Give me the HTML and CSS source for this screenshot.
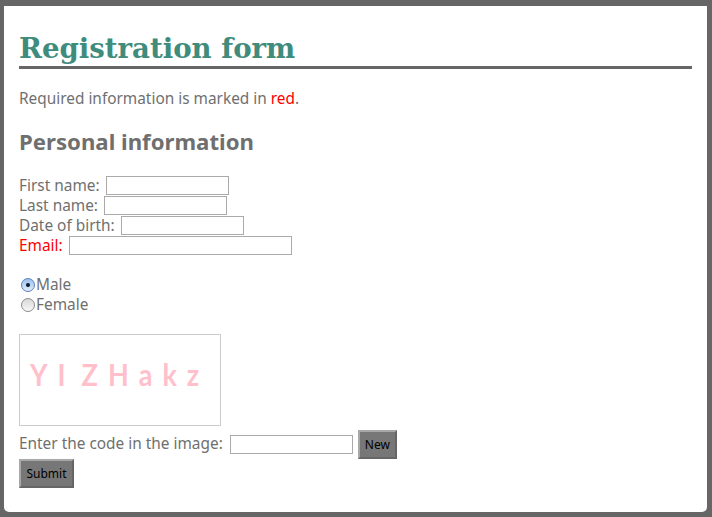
FILE: index.html
```html
<!DOCTYPE html>
<html lang="en">

<head>
    <meta charset="UTF-8">
    <title>Registration form</title>
    <link rel="stylesheet" href="styles.css">
</head>

<body>
    <div class="main-wrap">
        <h1 class="page-title">Registration form</h1>
        <p class="intro">Required information is marked in <span class="required">red</span>.</p>
        <h2 class="section-title">Personal information</h2>
        <form>
            <section class="fields">
                <div class="field-row"><label for="first">First name:</label> <input type="text" id="first" class="text-input"></div>
                <div class="field-row"><label for="last">Last name:</label> <input type="text" id="last" class="text-input"></div>
                <div class="field-row"><label for="dob">Date of birth:</label> <input type="text" id="dob" class="text-input"></div>
                <div class="field-row required"><label for="email">Email:</label> <input type="text" id="email" class="text-input email-input"></div>
            </section>
            <section class="gender">
                <div class="radio-row"><input type="radio" name="gender" id="male" class="radio" checked><label for="male">Male</label></div>
                <div class="radio-row"><input type="radio" name="gender" id="female" class="radio"><label for="female">Female</label></div>
            </section>
            <div class="captcha">
                <span>Y</span><span>I</span><span class="captcha-gap">Z</span><span>H</span><span>a</span><span>k</span><span>z</span>
            </div>
            <div class="code-row">
                <label for="code">Enter the code in the image:</label>
                <input type="text" id="code" class="text-input">
                <input type="button" value="New" class="btn">
            </div>
            <input type="submit" value="Submit" class="btn submit-btn">
        </form>
    </div>
</body>

</html>
```

FILE: styles.css
```css
html,
body {
    margin: 0;
    padding: 0;
    height: 100%;
    overflow: hidden;
}

body {
    background-color: #666666;
    padding: 6px 5px 5px 4px;
    box-sizing: border-box;
}

.main-wrap {
    height: 100%;
    box-sizing: border-box;
    background-color: #ffffff;
    border-radius: 0 0 5px 5px;
    padding: 25px 15px 0;

    color: #6f6f6f;
    font-family: "Noto Sans", "Open Sans", sans-serif;
    font-size: 15.4px;
    line-height: 20px;
}

.page-title {
    margin: 0;
    height: 35px;
    border-bottom: 3px solid #666666;

    color: #408c7c;
    font-family: "DejaVu Serif", Georgia, serif;
    font-size: 27.6px;
    line-height: 35px;
}

.intro {
    margin: 20px 0 0;
}

.required {
    color: #ff0000;
}

.section-title {
    margin: 18px 0 0;
    font-size: 22.2px;
    line-height: 30px;
}

.fields {
    margin-top: 17px;
}

.field-row {
    height: 20px;
    display: flex;
    align-items: flex-start;
    gap: 6px;
}

.field-row label,
.radio-row label {
    padding-top: 2px;
}

.text-input {
    width: 123px;
    height: 19px;
    box-sizing: border-box;
    margin: 2px 0 0;
    padding: 0 2px;
    border: 1px solid #aaaaaa;
    background-color: #ffffff;
}

.email-input {
    width: 223px;
}

.gender {
    margin-top: 19px;
}

.radio-row {
    height: 20px;
    display: flex;
    align-items: flex-start;
}

.radio {
    appearance: none;
    width: 14px;
    height: 14px;
    margin: 5px 1px 0 2px;
    box-sizing: border-box;
    border: 1px solid #8c8c8c;
    border-radius: 50%;
    background: linear-gradient(#d8d8d8, #f8f8f8);
}

.radio:checked {
    border-color: #5b82b8;
    background: radial-gradient(circle, #10203a 0, #10203a 1.5px, transparent 2.5px), linear-gradient(#9cc0ee, #e0edfb);
}

.captcha {
    width: 202px;
    height: 92px;
    box-sizing: border-box;
    margin-top: 21px;
    padding: 0 0 13px 10px;
    border: 1px solid #cccccc;

    display: flex;
    align-items: center;
    gap: 10px;

    color: #ffc0cb;
    font-family: "Lato", sans-serif;
    font-size: 27px;
    font-weight: 700;
}

.captcha span {
    transform: scaleY(1.15);
}

.captcha-gap {
    margin-left: 6px;
}

.code-row {
    height: 29px;
    margin-top: 4px;
    display: flex;
    align-items: flex-start;
    gap: 5px;
}

.code-row .text-input {
    margin-top: 5px;
}

.code-row label {
    margin: 4px 0 0;
    padding-right: 2px;
}

.btn {
    height: 29px;
    margin: 0;
    padding: 0 5px;
    box-sizing: border-box;
    border: 2px solid;
    border-color: #a8a8a8 #666666 #666666 #a8a8a8;
    background-color: #777777;
    color: #000000;
    font-family: "Noto Sans", "Open Sans", sans-serif;
    font-size: 12px;
}

.submit-btn {
    width: 55px;
}
```
